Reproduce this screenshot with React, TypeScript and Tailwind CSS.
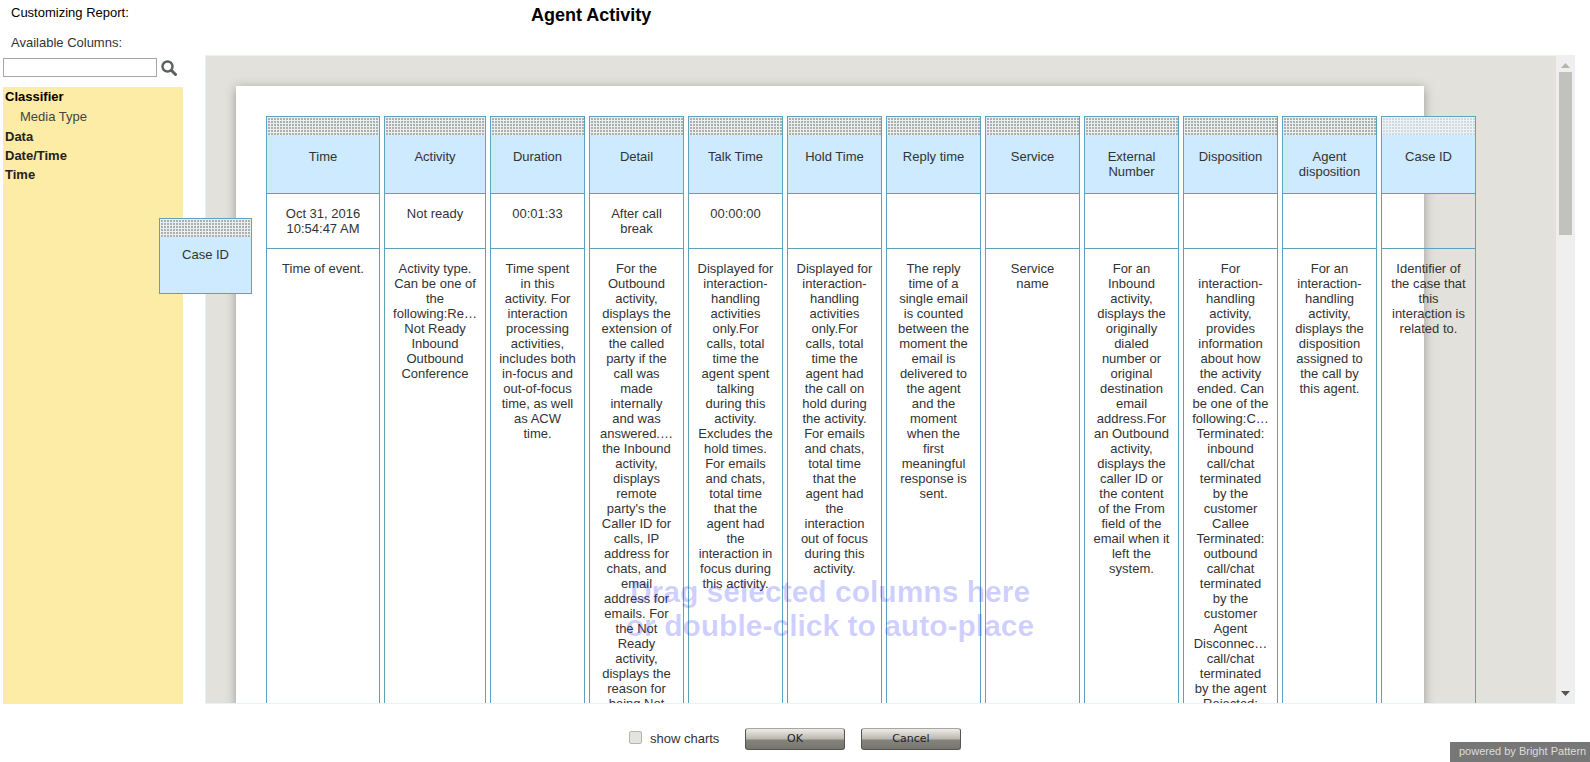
const columns: { title: string; w: string; cell: string; desc: string }[] = [
  { title: "Time", w: "w-[114px]", cell: "Oct 31, 2016\n10:54:47 AM", desc: "Time of event." },
  { title: "Activity", w: "w-[102px]", cell: "Not ready", desc: "Activity type.\nCan be one of\nthe\nfollowing:Re…\nNot Ready\nInbound\nOutbound\nConference" },
  { title: "Duration", w: "w-[95px]", cell: "00:01:33", desc: "Time spent\nin this\nactivity. For\ninteraction\nprocessing\nactivities,\nincludes both\nin-focus and\nout-of-focus\ntime, as well\nas ACW\ntime." },
  { title: "Detail", w: "w-[95px]", cell: "After call\nbreak", desc: "For the\nOutbound\nactivity,\ndisplays the\nextension of\nthe called\nparty if the\ncall was\nmade\ninternally\nand was\nanswered.…\nthe Inbound\nactivity,\ndisplays\nremote\nparty's the\nCaller ID for\ncalls, IP\naddress for\nchats, and\nemail\naddress for\nemails. For\nthe Not\nReady\nactivity,\ndisplays the\nreason for\nbeing Not" },
  { title: "Talk Time", w: "w-[95px]", cell: "00:00:00", desc: "Displayed for\ninteraction-\nhandling\nactivities\nonly.For\ncalls, total\ntime the\nagent spent\ntalking\nduring this\nactivity.\nExcludes the\nhold times.\nFor emails\nand chats,\ntotal time\nthat the\nagent had\nthe\ninteraction in\nfocus during\nthis activity." },
  { title: "Hold Time", w: "w-[95px]", cell: "", desc: "Displayed for\ninteraction-\nhandling\nactivities\nonly.For\ncalls, total\ntime the\nagent had\nthe call on\nhold during\nthe activity.\nFor emails\nand chats,\ntotal time\nthat the\nagent had\nthe\ninteraction\nout of focus\nduring this\nactivity." },
  { title: "Reply time", w: "w-[95px]", cell: "", desc: "The reply\ntime of a\nsingle email\nis counted\nbetween the\nmoment the\nemail is\ndelivered to\nthe agent\nand the\nmoment\nwhen the\nfirst\nmeaningful\nresponse is\nsent." },
  { title: "Service", w: "w-[95px]", cell: "", desc: "Service\nname" },
  { title: "External\nNumber", w: "w-[95px]", cell: "", desc: "For an\nInbound\nactivity,\ndisplays the\noriginally\ndialed\nnumber or\noriginal\ndestination\nemail\naddress.For\nan Outbound\nactivity,\ndisplays the\ncaller ID or\nthe content\nof the From\nfield of the\nemail when it\nleft the\nsystem." },
  { title: "Disposition", w: "w-[95px]", cell: "", desc: "For\ninteraction-\nhandling\nactivity,\nprovides\ninformation\nabout how\nthe activity\nended. Can\nbe one of the\nfollowing:C…\nTerminated:\ninbound\ncall/chat\nterminated\nby the\ncustomer\nCallee\nTerminated:\noutbound\ncall/chat\nterminated\nby the\ncustomer\nAgent\nDisconnec…\ncall/chat\nterminated\nby the agent\nRejected:" },
  { title: "Agent\ndisposition", w: "w-[95px]", cell: "", desc: "For an\ninteraction-\nhandling\nactivity,\ndisplays the\ndisposition\nassigned to\nthe call by\nthis agent." },
  { title: "Case ID", w: "w-[95px]", cell: "", desc: "Identifier of\nthe case that\nthis\ninteraction is\nrelated to." },
];

function Dotted({ light }: { light?: boolean }) {
  return light ? (
    <div className="h-[18px] bg-[#d4d8da] bg-[linear-gradient(90deg,#e8f3fa_1px,transparent_1px),linear-gradient(#e8f3fa_1px,transparent_1px)] bg-[size:3px_3px]" />
  ) : (
    <div className="h-[18px] bg-[#b0aea8] bg-[linear-gradient(90deg,#e6f0f5_1px,transparent_1px),linear-gradient(#e6f0f5_1px,transparent_1px)] bg-[size:3px_3px]" />
  );
}

function Column({ title, w, cell, desc, last }: { title: string; w: string; cell: string; desc: string; last: boolean }) {
  return (
    <div className={`${w} shrink-0 border border-[#5ba3bc] flex flex-col text-center whitespace-pre-line ${last ? "" : "bg-white"}`}>
      <Dotted light={last} />
      <div className="h-[59px] bg-[#cdeaff] pt-[14px] border-b border-[#5ba3bc]">{title}</div>
      <div className="h-[55px] pt-[12px] border-b border-[#5ba3bc]">{cell}</div>
      <div className="pt-[12px] h-[1000px]">{desc}</div>
    </div>
  );
}

function Btn({ label }: { label: string }) {
  return (
    <button className="w-[100px] h-[22px] rounded-[3px] border border-[#55544e] border-t-[#a8a59c] bg-[linear-gradient(#eeece6_0%,#b9b7b0_50%,#85847c_55%,#77766e_100%)] text-[11px] text-[#222] font-['DejaVu_Sans',sans-serif] leading-[20px]">
      {label}
    </button>
  );
}

export default function App() {
  return (
    <div className="relative w-[1590px] h-[762px] overflow-hidden bg-white text-[13px] leading-[15px] text-[#333] font-['Liberation_Sans',Arial,sans-serif]">
      <div className="flex h-[704px]">
        <aside className="w-[205px] shrink-0 flex flex-col">
          <div className="pl-[11px] pt-[5px] h-[35px] text-black">Customizing Report:</div>
          <div className="pl-[11px] h-[23px]">Available Columns:</div>
          <div className="flex items-center pl-[3px] h-[19px]">
            <input className="w-[154px] h-[19px] border border-[#a6a6a6] bg-white" aria-label="Search" />
            <svg className="ml-[4px]" width="16" height="16" viewBox="0 0 16 16" fill="none">
              <circle cx="6.5" cy="6.5" r="5" stroke="#5a5f5f" strokeWidth="2.4" />
              <line x1="10.3" y1="10.3" x2="14.5" y2="14.5" stroke="#5a5f5f" strokeWidth="3" strokeLinecap="round" />
            </svg>
          </div>
          <div className="mt-[10px] ml-[3px] w-[180px] flex-1 bg-[#fdeca6] pt-[2px] text-[#222]">
            <div className="pl-[2px] h-[20px] leading-[16px] font-bold text-black">Classifier</div>
            <div className="pl-[17px] h-[20px] leading-[16px] text-[#444]">Media Type</div>
            <div className="pl-[2px] h-[19px] leading-[16px] font-bold">Data</div>
            <div className="pl-[2px] h-[19px] leading-[16px] font-bold">Date/Time</div>
            <div className="pl-[2px] h-[19px] leading-[16px] font-bold">Time</div>
          </div>
        </aside>

        <main className="flex-1 flex flex-col min-w-0 pr-[15px]">
          <div className="h-[55px] pl-[326px] pt-[5px] text-[18px] leading-[20px] font-bold text-black">Agent Activity</div>
          <div className="flex-1 min-h-0 flex border border-[#e6f1f8] overflow-hidden">
            <div className="flex-1 min-w-0 bg-[#e2e1dc] pl-[30px] pt-[30px] overflow-hidden">
              <div className="w-[1188px] h-[1200px] bg-white shadow-[0_2px_10px_rgba(60,55,45,0.42)] pl-[30px] pt-[30px]">
                <div className="flex gap-[4px] w-[1210px]">
                  {columns.map((c, i) => (
                    <Column key={c.title} {...c} last={i === columns.length - 1} />
                  ))}
                </div>
              </div>
            </div>
            <div className="w-[18px] shrink-0 bg-[#efefef] flex flex-col items-center">
              <svg className="mt-[7px]" width="9" height="5" viewBox="0 0 9 5"><path d="M4.5 0L9 5H0z" fill="#b5b5ad" /></svg>
              <div className="mt-[4px] w-[13px] h-[163px] bg-[#c1c1bd]" />
              <div className="flex-1" />
              <svg className="mb-[7px]" width="9" height="5" viewBox="0 0 9 5"><path d="M0 0h9L4.5 5z" fill="#555" /></svg>
            </div>
          </div>
        </main>
      </div>

      <div className="flex items-start pl-[629px] pt-[24px]">
        <input type="checkbox" className="appearance-none w-[13px] h-[13px] mt-[3px] rounded-[2px] border border-[#b5b5b0] bg-[#e4e3df]" aria-label="show charts" />
        <span className="ml-[8px] mt-[3px] w-[95px] text-[#333]">show charts</span>
        <Btn label="OK" />
        <div className="w-[16px]" />
        <Btn label="Cancel" />
      </div>

      <div className="absolute right-0 bottom-0 w-[140px] h-[20px] bg-[#777] pl-[9px] text-[11px] leading-[19px] text-[#ddd] whitespace-nowrap">powered by Bright Pattern</div>

      <div className="absolute left-[159px] top-[218px] w-[93px] h-[76px] border border-[#5ba3bc] bg-[#cdeaff] text-center">
        <Dotted />
        <div className="pt-[10px]">Case ID</div>
      </div>

      <div className="absolute left-[580px] top-[575px] w-[500px] text-center text-[30px] leading-[34px] font-bold text-[rgba(40,40,255,0.22)] pointer-events-none">
        Drag selected columns here
        <br />
        or double-click to auto-place
      </div>
    </div>
  );
}
